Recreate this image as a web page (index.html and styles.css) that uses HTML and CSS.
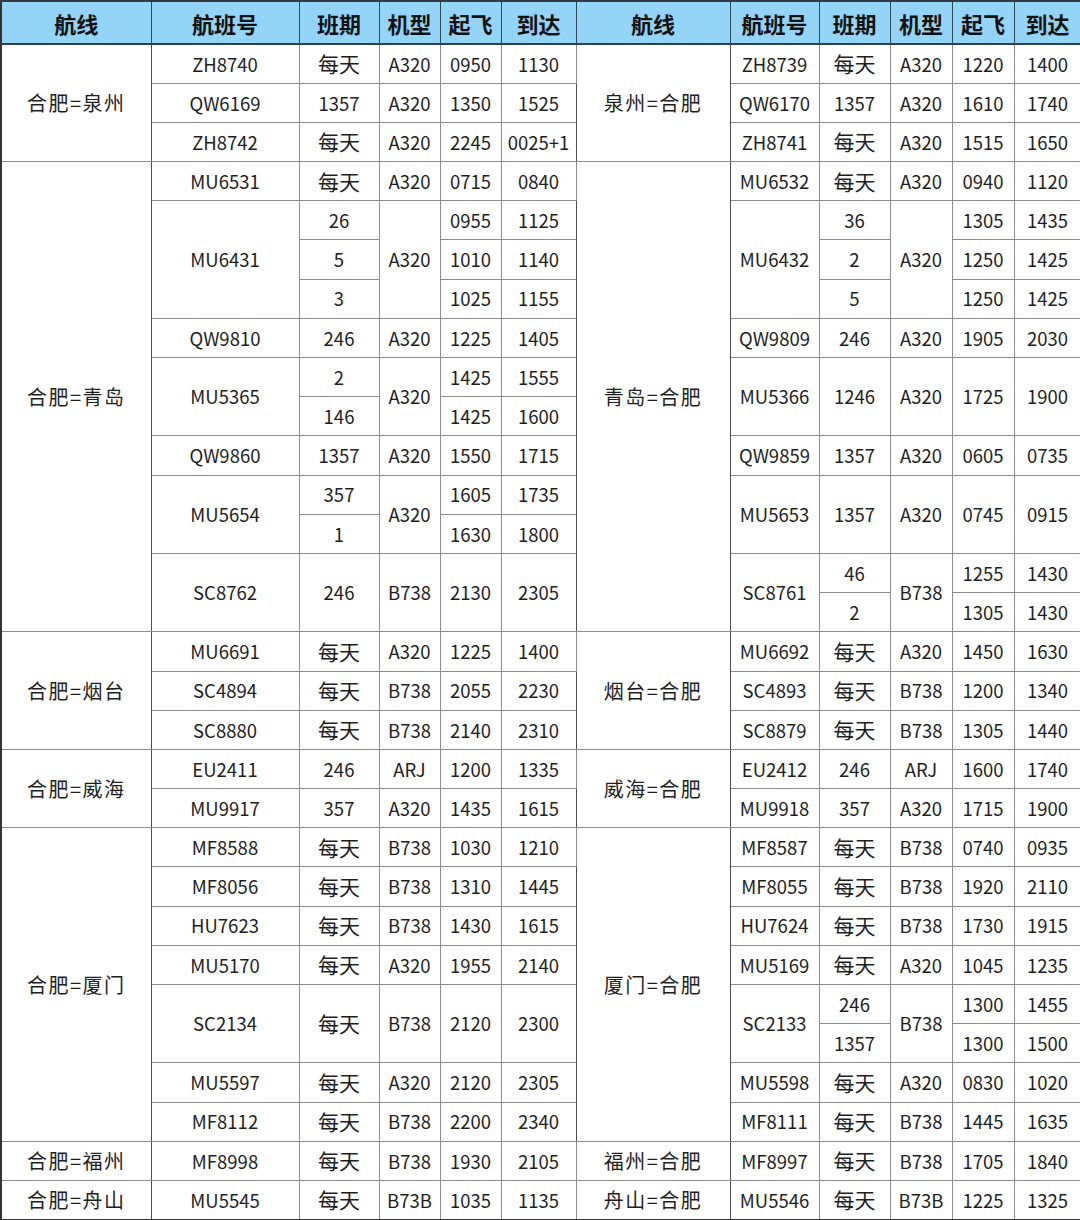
FILE: index.html
```html
<!DOCTYPE html>
<html lang="zh-CN">
<head>
<meta charset="utf-8">
<title>航线表</title>
<link rel="stylesheet" href="styles.css">
</head>
<body>
<table class="sched">
<colgroup>
<col class="c1"><col class="c2"><col class="c3"><col class="c4"><col class="c5"><col class="c6">
<col class="c7"><col class="c8"><col class="c9"><col class="c10"><col class="c11"><col class="c12">
</colgroup>
<thead>
<tr class="head">
<th class="route">航线</th><th>航班号</th><th>班期</th><th>机型</th><th>起飞</th><th>到达</th>
<th class="route">航线</th><th>航班号</th><th>班期</th><th>机型</th><th>起飞</th><th>到达</th>
</tr>
</thead>
<tbody>
<tr>
<td class="route" rowspan="3">合肥=泉州</td><td>ZH8740</td><td class="cn">每天</td><td>A320</td><td>0950</td><td>1130</td>
<td class="route" rowspan="3">泉州=合肥</td><td>ZH8739</td><td class="cn">每天</td><td>A320</td><td>1220</td><td>1400</td>
</tr>
<tr>
<td>QW6169</td><td>1357</td><td>A320</td><td>1350</td><td>1525</td>
<td>QW6170</td><td>1357</td><td>A320</td><td>1610</td><td>1740</td>
</tr>
<tr>
<td>ZH8742</td><td class="cn">每天</td><td>A320</td><td>2245</td><td>0025+1</td>
<td>ZH8741</td><td class="cn">每天</td><td>A320</td><td>1515</td><td>1650</td>
</tr>

<tr>
<td class="route" rowspan="12">合肥=青岛</td><td>MU6531</td><td class="cn">每天</td><td>A320</td><td>0715</td><td>0840</td>
<td class="route" rowspan="12">青岛=合肥</td><td>MU6532</td><td class="cn">每天</td><td>A320</td><td>0940</td><td>1120</td>
</tr>
<tr>
<td rowspan="3">MU6431</td><td>26</td><td rowspan="3">A320</td><td>0955</td><td>1125</td>
<td rowspan="3">MU6432</td><td>36</td><td rowspan="3">A320</td><td>1305</td><td>1435</td>
</tr>
<tr>
<td>5</td><td>1010</td><td>1140</td>
<td>2</td><td>1250</td><td>1425</td>
</tr>
<tr>
<td>3</td><td>1025</td><td>1155</td>
<td>5</td><td>1250</td><td>1425</td>
</tr>
<tr>
<td>QW9810</td><td>246</td><td>A320</td><td>1225</td><td>1405</td>
<td>QW9809</td><td>246</td><td>A320</td><td>1905</td><td>2030</td>
</tr>
<tr>
<td rowspan="2">MU5365</td><td>2</td><td rowspan="2">A320</td><td>1425</td><td>1555</td>
<td rowspan="2">MU5366</td><td rowspan="2">1246</td><td rowspan="2">A320</td><td rowspan="2">1725</td><td rowspan="2">1900</td>
</tr>
<tr>
<td>146</td><td>1425</td><td>1600</td>
</tr>
<tr>
<td>QW9860</td><td>1357</td><td>A320</td><td>1550</td><td>1715</td>
<td>QW9859</td><td>1357</td><td>A320</td><td>0605</td><td>0735</td>
</tr>
<tr>
<td rowspan="2">MU5654</td><td>357</td><td rowspan="2">A320</td><td>1605</td><td>1735</td>
<td rowspan="2">MU5653</td><td rowspan="2">1357</td><td rowspan="2">A320</td><td rowspan="2">0745</td><td rowspan="2">0915</td>
</tr>
<tr>
<td>1</td><td>1630</td><td>1800</td>
</tr>
<tr>
<td rowspan="2">SC8762</td><td rowspan="2">246</td><td rowspan="2">B738</td><td rowspan="2">2130</td><td rowspan="2">2305</td>
<td rowspan="2">SC8761</td><td>46</td><td rowspan="2">B738</td><td>1255</td><td>1430</td>
</tr>
<tr>
<td>2</td><td>1305</td><td>1430</td>
</tr>

<tr>
<td class="route" rowspan="3">合肥=烟台</td><td>MU6691</td><td class="cn">每天</td><td>A320</td><td>1225</td><td>1400</td>
<td class="route" rowspan="3">烟台=合肥</td><td>MU6692</td><td class="cn">每天</td><td>A320</td><td>1450</td><td>1630</td>
</tr>
<tr>
<td>SC4894</td><td class="cn">每天</td><td>B738</td><td>2055</td><td>2230</td>
<td>SC4893</td><td class="cn">每天</td><td>B738</td><td>1200</td><td>1340</td>
</tr>
<tr>
<td>SC8880</td><td class="cn">每天</td><td>B738</td><td>2140</td><td>2310</td>
<td>SC8879</td><td class="cn">每天</td><td>B738</td><td>1305</td><td>1440</td>
</tr>

<tr>
<td class="route" rowspan="2">合肥=威海</td><td>EU2411</td><td>246</td><td>ARJ</td><td>1200</td><td>1335</td>
<td class="route" rowspan="2">威海=合肥</td><td>EU2412</td><td>246</td><td>ARJ</td><td>1600</td><td>1740</td>
</tr>
<tr>
<td>MU9917</td><td>357</td><td>A320</td><td>1435</td><td>1615</td>
<td>MU9918</td><td>357</td><td>A320</td><td>1715</td><td>1900</td>
</tr>

<tr>
<td class="route" rowspan="8">合肥=厦门</td><td>MF8588</td><td class="cn">每天</td><td>B738</td><td>1030</td><td>1210</td>
<td class="route" rowspan="8">厦门=合肥</td><td>MF8587</td><td class="cn">每天</td><td>B738</td><td>0740</td><td>0935</td>
</tr>
<tr>
<td>MF8056</td><td class="cn">每天</td><td>B738</td><td>1310</td><td>1445</td>
<td>MF8055</td><td class="cn">每天</td><td>B738</td><td>1920</td><td>2110</td>
</tr>
<tr>
<td>HU7623</td><td class="cn">每天</td><td>B738</td><td>1430</td><td>1615</td>
<td>HU7624</td><td class="cn">每天</td><td>B738</td><td>1730</td><td>1915</td>
</tr>
<tr>
<td>MU5170</td><td class="cn">每天</td><td>A320</td><td>1955</td><td>2140</td>
<td>MU5169</td><td class="cn">每天</td><td>A320</td><td>1045</td><td>1235</td>
</tr>
<tr>
<td rowspan="2">SC2134</td><td class="cn" rowspan="2">每天</td><td rowspan="2">B738</td><td rowspan="2">2120</td><td rowspan="2">2300</td>
<td rowspan="2">SC2133</td><td>246</td><td rowspan="2">B738</td><td>1300</td><td>1455</td>
</tr>
<tr>
<td>1357</td><td>1300</td><td>1500</td>
</tr>
<tr>
<td>MU5597</td><td class="cn">每天</td><td>A320</td><td>2120</td><td>2305</td>
<td>MU5598</td><td class="cn">每天</td><td>A320</td><td>0830</td><td>1020</td>
</tr>
<tr>
<td>MF8112</td><td class="cn">每天</td><td>B738</td><td>2200</td><td>2340</td>
<td>MF8111</td><td class="cn">每天</td><td>B738</td><td>1445</td><td>1635</td>
</tr>

<tr>
<td class="route">合肥=福州</td><td>MF8998</td><td class="cn">每天</td><td>B738</td><td>1930</td><td>2105</td>
<td class="route">福州=合肥</td><td>MF8997</td><td class="cn">每天</td><td>B738</td><td>1705</td><td>1840</td>
</tr>
<tr>
<td class="route">合肥=舟山</td><td>MU5545</td><td class="cn">每天</td><td>B73B</td><td>1035</td><td>1135</td>
<td class="route">舟山=合肥</td><td>MU5546</td><td class="cn">每天</td><td>B73B</td><td>1225</td><td>1325</td>
</tr>
</tbody>
</table>
</body>
</html>
```
FILE: styles.css
```css
html, body {
  margin: 0;
  padding: 0;
  background: #ffffff;
}
.sched {
  width: 1080px;
  table-layout: fixed;
  border-collapse: collapse;
  font-family: "Noto Sans CJK SC", "Noto Sans", sans-serif;
  font-size: 18.5px;
  color: #1e1e1e;
  border-top: 2px solid #2f3a42;
  border-left: 2px solid #333333;
  border-bottom: 2px solid #333333;
}
.c1 { width: 150px; }
.c2 { width: 148px; }
.c3 { width: 80px; }
.c4 { width: 61px; }
.c5 { width: 61px; }
.c6 { width: 75px; }
.c7 { width: 154px; }
.c8 { width: 89px; }
.c9 { width: 71px; }
.c10 { width: 62px; }
.c11 { width: 62px; }
.c12 { width: 67px; }
.sched th,
.sched td {
  padding: 0;
  text-align: center;
  vertical-align: middle;
  white-space: nowrap;
  overflow: hidden;
  border: 1px solid #8c8c8c;
  line-height: 1;
}
.head {
  height: 43px;
  background: #94d4f7;
}
.head th {
  font-size: 22px;
  font-weight: 700;
  color: #111111;
  border-color: #2e4656;
  border-bottom: 2px solid #2e3f4b;
}
.sched tbody tr {
  height: 39.2px;
}
.sched td.cn {
  font-size: 21px;
}
.sched td.route {
  font-size: 20px;
  letter-spacing: 1.5px;
  border-left: 1px solid #4a4a4a;
  border-right: 1px solid #4a4a4a;
}
```
